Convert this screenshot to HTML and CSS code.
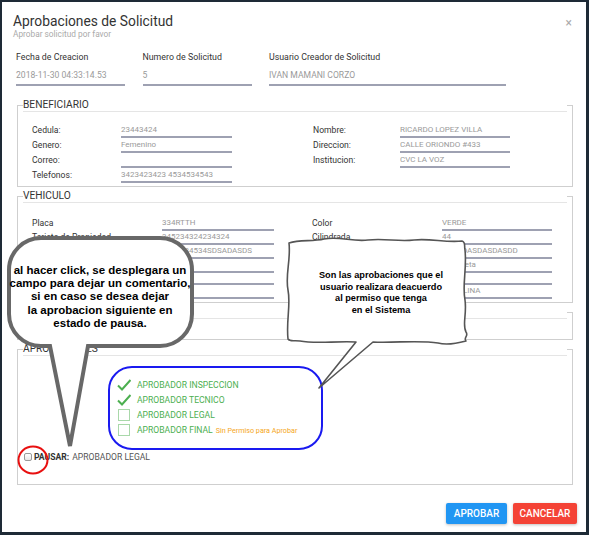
FILE: index.html
```html
<!DOCTYPE html>
<html lang="es">
<head>
<meta charset="utf-8">
<title>Aprobaciones de Solicitud</title>
<link rel="stylesheet" href="styles.css">
</head>
<body>
<div class="page">
  <div class="modal">
    <div class="head">
      <div>
        <div class="title">Aprobaciones de Solicitud</div>
        <div class="subtitle">Aprobar solicitud por favor</div>
      </div>
      <div class="close">×</div>
    </div>

    <div class="top-fields">
      <div class="tf">
        <div class="tf-label">Fecha de Creacion</div>
        <div class="tf-value">2018-11-30 04:33:14.53</div>
      </div>
      <div class="tf">
        <div class="tf-label">Numero de Solicitud</div>
        <div class="tf-value">5</div>
      </div>
      <div class="tf">
        <div class="tf-label">Usuario Creador de Solicitud</div>
        <div class="tf-value">IVAN MAMANI CORZO</div>
      </div>
    </div>

    <fieldset class="box box-ben">
      <legend>BENEFICIARIO</legend>
      <div class="grid grid-ben">
        <div class="lbl">Cedula:</div><div class="val">23443424</div>
        <div class="lbl r">Nombre:</div><div class="val">RICARDO LOPEZ VILLA</div>
        <div class="lbl">Genero:</div><div class="val">Femenino</div>
        <div class="lbl r">Direccion:</div><div class="val">CALLE ORIONDO #433</div>
        <div class="lbl">Correo:</div><div class="val"></div>
        <div class="lbl r">Institucion:</div><div class="val">CVC LA VOZ</div>
        <div class="lbl">Telefonos:</div><div class="val">3423423423 4534534543</div>
      </div>
    </fieldset>

    <fieldset class="box box-veh">
      <legend>VEHICULO</legend>
      <div class="grid grid-veh">
        <div class="lbl">Placa</div><div class="val">334RTTH</div>
        <div class="lbl r">Color</div><div class="val">VERDE</div>
        <div class="lbl">Tarjeta de Propiedad</div><div class="val">345234324234324</div>
        <div class="lbl r">Cilindrada</div><div class="val">44</div>
        <div class="lbl">Chasis</div><div class="val">3453534534SDSADASDS</div>
        <div class="lbl r">Motor</div><div class="val">SDASDASDASDASDD</div>
        <div class="lbl">Marca</div><div class="val">Nissan</div>
        <div class="lbl r">Clase</div><div class="val">Vagoneta</div>
        <div class="lbl">Modelo</div><div class="val"></div>
        <div class="lbl r">Tipo</div><div class="val"></div>
        <div class="lbl">Servicio</div><div class="val"></div>
        <div class="lbl r">Combustible</div><div class="val">GASOLINA</div>
      </div>
    </fieldset>

    <fieldset class="box box-obs">
      <legend>OBSERVACIONES</legend>
      <div class="obs-body"></div>
    </fieldset>

    <fieldset class="box box-apr">
      <legend>APROBACIONES</legend>
      <ul class="checks">
        <li class="ck done">
          <svg class="ck-icon" width="14" height="12" viewBox="0 0 14 12"><path d="M1 6.5 L5 10.5 L13.5 1" fill="none" stroke="#4caf50" stroke-width="2"/></svg>
          <span>APROBADOR INSPECCION</span>
        </li>
        <li class="ck done">
          <svg class="ck-icon" width="14" height="12" viewBox="0 0 14 12"><path d="M1 6.5 L5 10.5 L13.5 1" fill="none" stroke="#4caf50" stroke-width="2"/></svg>
          <span>APROBADOR TECNICO</span>
        </li>
        <li class="ck">
          <span class="ck-box"></span>
          <span>APROBADOR LEGAL</span>
        </li>
        <li class="ck">
          <span class="ck-box"></span>
          <span>APROBADOR FINAL</span>
          <span class="no-perm">Sin Permiso para Aprobar</span>
        </li>
      </ul>
      <div class="pause">
        <span class="pause-box"></span>
        <span class="pause-key">PAUSAR:</span>
        <span class="pause-val">APROBADOR LEGAL</span>
      </div>
    </fieldset>

    <div class="foot">
      <button class="btn btn-ok">APROBAR</button>
      <button class="btn btn-cancel">CANCELAR</button>
    </div>
  </div>

  <svg class="overlay" width="589" height="535" viewBox="0 0 589 535">
    <rect x="109" y="367" width="213" height="82" rx="23" ry="23" fill="none" stroke="#1a1af0" stroke-width="2"/>
    <ellipse cx="33" cy="460" rx="14.5" ry="13.5" fill="none" stroke="#e81010" stroke-width="2"/>
    <path d="M41 238 H160 A32 32 0 0 1 192 270 V314 A32 32 0 0 1 160 346 H88 L70 446 L50 346 H41 A32 32 0 0 1 9 314 V270 A32 32 0 0 1 41 238 Z" fill="#fff" stroke="#686868" stroke-width="4" stroke-linejoin="miter"/>
    <path d="M289 243 C300 239 312 242 324 239 C340 236 352 242 368 240 C385 238 398 242 414 240 C430 238 446 243 462 241 C466 242 464 246 465 250 C467 270 462 285 465 300 C467 315 462 325 466 332 C469 336 463 338 466 341 C455 344 445 345 438 343 C420 340 395 343 373 342 L319 388 L356 342 C335 341 315 344 300 341 C294 340 290 342 288 339 C286 320 291 305 288 290 C285 275 291 260 289 243 Z" fill="#fff" stroke="#555" stroke-width="1.6" stroke-linejoin="round"/>
  </svg>

  <div class="note note-left">al hacer click, se desplegara un<br>campo para dejar un comentario,<br>si en caso se desea dejar<br>la aprobacion siguiente en<br>estado de pausa.</div>
  <div class="note note-right">Son las aprobaciones que el<br>usuario realizara deacuerdo<br>al permiso que tenga<br>en el Sistema</div>
</div>
</body>
</html>
```

FILE: styles.css
```css
html, body {
  margin: 0;
  padding: 0;
  background: #1e2a36;
}

body {
  font-family: Roboto, "Liberation Sans", Arial, sans-serif;
  color: #333;
}

.page {
  position: relative;
  width: 589px;
  height: 535px;
  box-sizing: border-box;
  padding: 2px 3px 3px 2px;
  overflow: hidden;
}

.modal {
  background: #fff;
  height: 530px;
  box-sizing: border-box;
  overflow: hidden;
}

/* header */
.head {
  display: flex;
  justify-content: space-between;
  align-items: flex-start;
  padding: 11px 14px 0 11px;
}

.title {
  font-size: 13.8px;
  line-height: 16px;
  color: #333;
}

.subtitle {
  font-size: 8.3px;
  line-height: 10px;
  color: #aaa;
}

.close {
  font-size: 12px;
  line-height: 12px;
  margin-top: 4px;
  color: #aaa;
}

/* top fields */
.top-fields {
  display: grid;
  grid-template-columns: 109px 109px 237px;
  column-gap: 17.5px;
  margin: 13px 0 0 14px;
}

.tf-label {
  font-size: 8.8px;
  line-height: 11px;
  color: #333;
}

.tf-value {
  margin-top: 6px;
  font-size: 8.6px;
  line-height: 12px;
  padding-bottom: 3px;
  color: #9a9a9a;
  border-bottom: 2px solid #9ea1b2;
}

/* fieldsets */
.box {
  border: 1px solid #cfcfcf;
  padding: 0 5px;
  margin: 0 13px 0 15px;
  min-width: 0;
}

.box legend {
  display: block;
  box-sizing: border-box;
  width: 100%;
  padding: 0;
  font-size: 10.2px;
  line-height: 13px;
  color: #333;
  border-bottom: 1px solid #e5e5e5;
}

.box-ben {
  margin-top: 12px;
  padding-bottom: 3px;
}

.box-veh {
  margin-top: 2px;
  padding-bottom: 3px;
}

.box-veh .grid {
  margin-top: 14px;
}

.box-obs {
  margin-top: 2px;
}

.obs-body {
  height: 20px;
}

.box-apr {
  margin-top: 2px;
  padding-bottom: 21px;
}

.grid {
  display: grid;
  margin-top: 11px;
  padding-left: 9px;
}

.grid-ben {
  grid-template-columns: 89px 111px 81px 87px 110px;
}

.grid-veh {
  grid-template-columns: 130px 112px 38px 130px 110px;
}

.grid .r {
  grid-column: 4;
}

.lbl {
  font-size: 8.6px;
  color: #333;
}

.val {
  font-size: 8px;
  color: #9a9a9a;
  border-bottom: 2px solid #9ea1b2;
  white-space: nowrap;
  overflow: hidden;
}

.grid-ben .lbl,
.grid-ben .val {
  line-height: 13px;
}

.grid-ben .lbl {
  padding-top: 2px;
  line-height: 11px;
}

.grid-veh .lbl,
.grid-veh .val {
  line-height: 12px;
}

/* approvals */
.checks {
  list-style: none;
  margin: 21.5px 0 0 94px;
  padding: 0;
}

.ck {
  display: flex;
  align-items: center;
  height: 15px;
  font-size: 8.6px;
  color: #4caf50;
}

.ck-icon {
  flex: none;
  margin-right: 6px;
}

.ck-box {
  flex: none;
  box-sizing: border-box;
  width: 12px;
  height: 12px;
  margin: 0 7px 0 1px;
  border: 1px solid #a9d8aa;
}

.no-perm {
  margin-left: 3px;
  font-size: 7.2px;
  color: #f5a623;
}

.pause {
  display: flex;
  align-items: center;
  height: 12px;
  margin: 13.5px 0 0 1px;
  font-size: 8.6px;
}

.pause-box {
  box-sizing: border-box;
  width: 8px;
  height: 8px;
  margin-right: 2px;
  border: 1px solid #9a9a9a;
  border-radius: 2px;
  background: linear-gradient(#fff, #e6e6e6);
}

.pause-key {
  font-weight: bold;
  color: #333;
  margin-right: 3px;
}

.pause-val {
  color: #555;
}

/* footer */
.foot {
  display: flex;
  justify-content: flex-end;
  gap: 6px;
  margin: 18px 9px 0 0;
}

.btn {
  height: 21px;
  border: none;
  border-radius: 2px;
  padding: 0;
  font-family: Roboto, "Liberation Sans", sans-serif;
  font-weight: 500;
  font-size: 10px;
  color: #fff;
  box-shadow: 0 1px 3px rgba(0, 0, 0, 0.25);
}

.btn-ok {
  width: 61px;
  background: #2196f3;
}

.btn-cancel {
  width: 64px;
  background: #f44336;
}

/* annotations */
.overlay {
  position: absolute;
  left: 0;
  top: 0;
  pointer-events: none;
}

.note {
  position: absolute;
  text-align: center;
  font-family: "Liberation Sans", Arial, sans-serif;
  font-weight: bold;
  color: #000;
}

.note-left {
  left: 5px;
  top: 264px;
  width: 190px;
  font-size: 11.5px;
  line-height: 13.2px;
}

.note-right {
  left: 301px;
  top: 270px;
  width: 160px;
  font-size: 9.2px;
  line-height: 11.7px;
}
```
